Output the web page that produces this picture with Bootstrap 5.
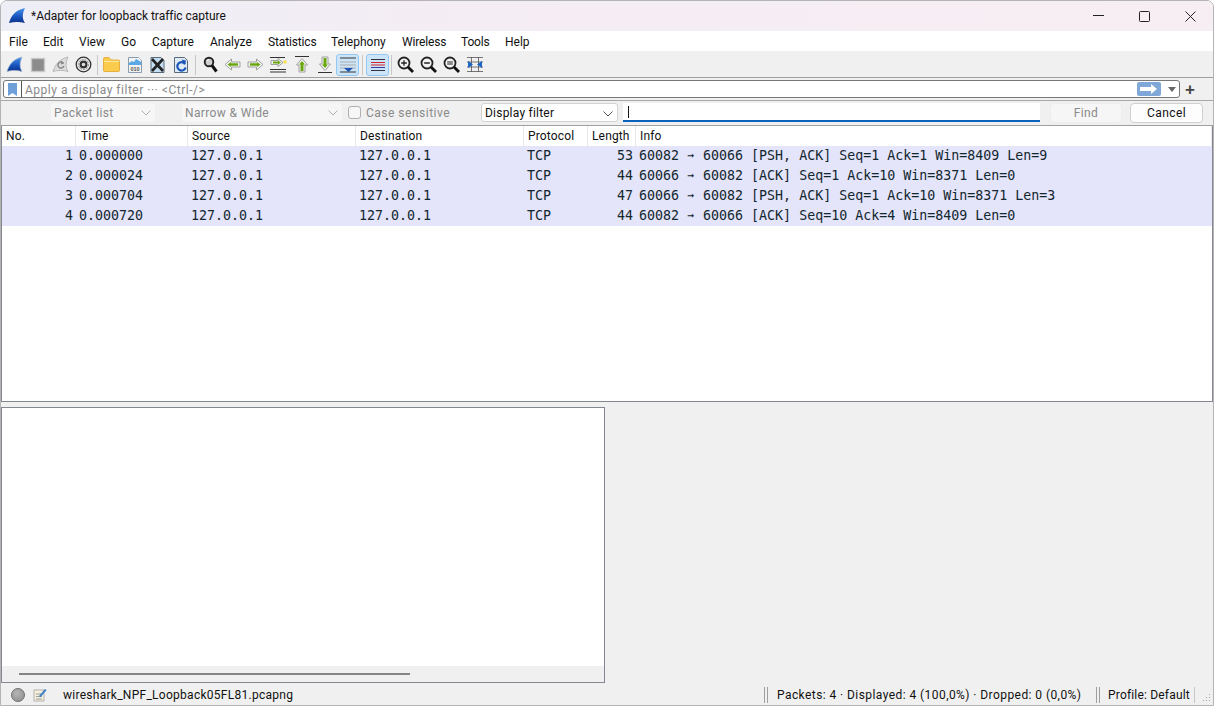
<!DOCTYPE html>
<html lang="en">
<head>
<meta charset="utf-8">
<title>Wireshark</title>
<link href="https://cdn.jsdelivr.net/npm/bootstrap@5.3.0/dist/css/bootstrap.min.css" rel="stylesheet">
<style>
html,body{height:100%;margin:0;overflow:hidden;background:#fff}
body{font-family:Roboto,"Liberation Sans",sans-serif;font-size:12px;color:#111;line-height:1}
.win{width:1214px;height:706px;display:flex;flex-direction:column;background:#f0f0f0;border:1px solid #b4b4b4;border-radius:7px 7px 0 0;overflow:hidden}
.titlebar{height:30px;flex:none;background:linear-gradient(90deg,#eeeef6,#f4edf3 40%,#f6eef3);padding-left:8px}
.ttl{margin-left:6px;letter-spacing:-.02px}
.wbtns{margin-left:auto;display:flex}
.wbtn{width:46px;height:30px;display:flex;align-items:center;justify-content:center}
.menubar{height:21px;flex:none;background:#fff;padding:2px 0 0 8px;border-bottom:1px solid #f0f0f0}
.menubar span{flex:none}
.m1{width:34px}.m2{width:36px}.m3{width:42px}.m4{width:31px}.m5{width:58px}.m6{width:58px}.m7{width:63px}.m8{width:71px}.m9{width:59px}.m10{width:44px}
.m7,.m9,.m10{letter-spacing:-.15px}
.toolbar{height:26px;flex:none;background:#f0f0f0;border-bottom:1px solid #a0a0a0;padding-left:2px}
.tb{width:23px;height:22px;display:flex;align-items:center;justify-content:center;flex:none;border:1px solid transparent;border-radius:3px}
.tb.on{background:#cce4f8;border-color:#92c8f4}
.tb.nudge{margin:0 -1px 0 1px}
.tsep{width:1px;height:20px;background:#c8c8c8;margin:0 2px;flex:none}
.tsep.w1{margin:0 2px 0 3px}
.tsep.w2{margin:0 3px}
.filterbar{height:23px;flex:none;padding:2px 0 2px 2px;border-bottom:1px solid #a8a8a8}
.fbox{width:1177px;height:18px;background:#fff;border:1px solid #777;border-radius:3px}
.fbook{width:18px;height:16px;border-right:1px solid #555;flex:none;display:flex;align-items:center;justify-content:center}
.fph{color:#8a8a8a;margin:1px 0 0 3px;letter-spacing:.52px;flex:1}
.fapply{width:24px;height:14px;background:#7fa8d8;border-radius:2px;display:flex;align-items:center;justify-content:center;flex:none}
.fdrop{width:18px;flex:none;display:flex;justify-content:center;padding-left:3px}
.fplus{font-family:"Liberation Sans",sans-serif;font-size:17px;font-weight:700;color:#444;margin-left:5px;line-height:1}
.findbar{height:25px;flex:none;padding:0 0 1px 50px;border-bottom:1px solid #a0a0a0}
.sel{height:19px;background:#f6f6f6;border-radius:3px;color:#8a8a8a;padding:0 3px;position:relative;flex:none;display:flex;align-items:center;letter-spacing:.38px}
.sel svg{position:absolute;right:4px;top:7px}
.s1{width:104px}.s2{width:160px;margin-left:27px}
.s3{width:137px;margin-left:8px;background:#fff;border:1px solid #d2d2d2;color:#111;padding:0 3px;letter-spacing:.22px}
.chk{width:13px;height:13px;border:1px solid #b0b0b0;border-radius:3px;background:#f6f6f6;margin:0 5px 0 6px;flex:none}
.cs{color:#8a8a8a;width:107px;letter-spacing:.5px;flex:none}
.fin{width:417px;height:19px;margin-left:5px;background:#fff;border-bottom:2px solid #0a63b8;flex:none;padding-left:5px;display:flex;align-items:center}
.caret{width:1px;height:12px;background:#111}
.fbtn{height:20px;border-radius:4px;display:flex;align-items:center;justify-content:center;flex:none;letter-spacing:.4px}
.bfind{width:72px;margin-left:10px;background:#f6f6f6;color:#8a8a8a;border:1px solid #ededed}
.bcan{width:73px;margin-left:8px;background:#fdfdfd;border:1px solid #d0d0d0;color:#111}
.plist{height:276px;flex:none;background:#fff;border:1px solid #828790;border-top:0}
.plist table{table-layout:fixed;width:1210px;border-collapse:separate;border-spacing:0;margin:0}
.plist th{font-weight:400;height:20px;padding:0 0 0 4px;border-right:1px solid #e8e8e8;background:#fff;white-space:nowrap;vertical-align:middle;letter-spacing:.15px}
.plist th:nth-child(2){padding-left:5px}
.plist td{height:20px;padding:0;background:#e4e4fb;color:#12272e;font-family:"DejaVu Sans Mono","Liberation Mono",monospace;font-size:13.3px;white-space:pre;vertical-align:middle;overflow:hidden}
.plist td.n{text-align:right;padding-right:3px}
.plist td.l{padding-left:3px}
.arw{display:inline-block;transform:scale(.85)}
.gap5{height:5px;flex:none}
.lower{height:276px;flex:none}
.dpane{width:604px;background:#fff;border:1px solid #828790;display:flex;flex-direction:column}
.dbody{flex:1}
.hbar{height:16px;background:#f0f0f0;display:flex;align-items:center;padding:0 194px 0 17px}
.hthumb{height:2px;background:#858585;flex:1}
.statusbar{height:22px;flex:none;padding:1px 0 0 10px;position:relative}
.led{width:14px;height:14px;border-radius:50%;background:radial-gradient(circle at 40% 35%,#b4b4b4,#8c8c8c);border:1px solid #6d6d6d;flex:none}
.fedit{margin-left:8px;flex:none}
.fname{margin-left:15px;letter-spacing:.27px}
.vs{width:4px;height:16px;border-left:1px solid #a0a0a0;border-right:1px solid #a0a0a0;flex:none}
.st1{width:328px;padding-left:9px;letter-spacing:.43px;flex:none;white-space:nowrap}
.st2{width:95px;padding-left:8px;margin-right:18px;border-right:1px solid #c8c8c8;height:16px;display:flex;align-items:center;flex:none;letter-spacing:.18px;white-space:nowrap}
.grip{position:absolute;right:2px;bottom:2px}
</style>
</head>
<body>
<div class="win">
  <div class="titlebar d-flex align-items-center">
    <svg width="16" height="16" viewBox="0 0 16 16"><defs><linearGradient id="sg" x1="0" y1="0" x2="0" y2="1"><stop offset="0" stop-color="#4a96e8"/><stop offset=".55" stop-color="#1a55c0"/><stop offset="1" stop-color="#0c3388"/></linearGradient></defs><path d="M0 15C2 8 6 2 16 0 13 6 13 11 16 15 11 13.500 5 13.500 0 15z" fill="url(#sg)"/></svg>
    <span class="ttl">*Adapter for loopback traffic capture</span>
    <div class="wbtns">
      <div class="wbtn"><svg width="11" height="2"><path d="M0 .5h11" stroke="#222"/></svg></div>
      <div class="wbtn"><svg width="11" height="11"><rect x=".5" y=".5" width="10" height="10" rx="1" fill="none" stroke="#222"/></svg></div>
      <div class="wbtn"><svg width="11" height="11"><path d="M.5.5l10 10M10.500.5l-10 10" stroke="#222"/></svg></div>
    </div>
  </div>
  <div class="menubar d-flex align-items-center">
    <span class="m1">File</span><span class="m2">Edit</span><span class="m3">View</span><span class="m4">Go</span><span class="m5">Capture</span><span class="m6">Analyze</span><span class="m7">Statistics</span><span class="m8">Telephony</span><span class="m9">Wireless</span><span class="m10">Tools</span><span>Help</span>
  </div>
  <div class="toolbar d-flex align-items-center">
    <div class="tb"><svg width="17" height="17" viewBox="0 0 17 17"><path d="M1 15.500C3 9 7 3 16 1 13.500 7 13.500 11 16 15.500 11 14 6 14 1 15.500z" fill="url(#sg)" stroke="#a8b8d0" stroke-width=".7"/></svg></div>
    <div class="tb"><svg width="16" height="16" viewBox="0 0 16 16"><rect x="1.500" y="1.500" width="13" height="13" fill="#8c8c8c" stroke="#c8c8c8" stroke-width="1.400"/></svg></div>
    <div class="tb"><svg width="17" height="17" viewBox="0 0 17 17"><path d="M1 15.500C3 9 7 3 16 1 13.500 7 13.500 11 16 15.500 11 14 6 14 1 15.500z" fill="#dcdcdc" stroke="#a8a8a8" stroke-width=".7"/><path d="M11.500 7.500a3 3 0 1 0 .3 2.500" fill="none" stroke="#8a8a8a" stroke-width="1.500"/><path d="M9 4.500l3 3-3 1z" fill="#8a8a8a"/></svg></div>
    <div class="tb"><svg width="17" height="17" viewBox="0 0 17 17"><circle cx="8.500" cy="8.500" r="7.300" fill="#e8e8e8" stroke="#333" stroke-width="1.300"/><circle cx="8.500" cy="8.500" r="5" fill="#fff" stroke="#777" stroke-width=".8" stroke-dasharray="2 1"/><circle cx="8.500" cy="8.500" r="4" fill="#333"/><circle cx="8.500" cy="8.500" r="1.800" fill="#ddd"/></svg></div>
    <div class="tsep"></div>
    <div class="tb"><svg width="17" height="15" viewBox="0 0 17 15"><path d="M.5 2q0-1.500 1.500-1.500h4L8 3h7.500q1 0 1 1v9.500q0 1-1 1H1.500q-1 0-1-1z" fill="#fbcb4c" stroke="#e2a52a" stroke-width=".8"/><path d="M1 4.500h15" stroke="#fde9a6"/></svg></div>
    <div class="tb"><svg width="14" height="16" viewBox="0 0 14 16"><path d="M.5.500h10l3 3v12H.5z" fill="#f2f2f2" stroke="#8a9cb0"/><path d="M1 6l3-2 2 1 2-3 2 1 3 2v3H1z" fill="#5aa8e6"/><path d="M11 1l2 2.500h-2z" fill="#fff"/><text x="7" y="14" font-size="5.500" font-family="Liberation Sans,sans-serif" font-weight="700" fill="#555" text-anchor="middle">010</text></svg></div>
    <div class="tb"><svg width="15" height="16" viewBox="0 0 15 16"><path d="M1 .5h10l3 3v12H1z" fill="#c4ddf2" stroke="#5a6a7a"/><path d="M2 2l11 12M13 2L2 14" stroke="#222" stroke-width="2.600"/></svg></div>
    <div class="tb"><svg width="14" height="16" viewBox="0 0 14 16"><path d="M.5.500h10l3 3v12H.5z" fill="#dfecf7" stroke="#5a6a7a"/><path d="M11 7a4.200 4.200 0 1 0 .6 3.500" fill="none" stroke="#1c55b8" stroke-width="2.200"/><path d="M7.500 2.500l4.500 1-1 4.500z" fill="#1c55b8"/></svg></div>
    <div class="tsep w1"></div>
    <div class="tb nudge"><svg width="16" height="17" viewBox="0 0 16 17"><circle cx="6" cy="6" r="4.300" fill="#cfcfcf" stroke="#222" stroke-width="1.900"/><path d="M4 4.500l2-1" stroke="#fff"/><path d="M9 9.500l4.500 6" stroke="#111" stroke-width="3"/></svg></div>
    <div class="tb"><svg width="17" height="13" viewBox="0 0 17 13"><path d="M1 6.500L7.500 1v3h8.500v5H7.500v3z" fill="#f4f4f4" stroke="#a0a0a0"/><path d="M3.500 6.500L7 4v1.200h7v2.600H7V9z" fill="#6aa80e"/></svg></div>
    <div class="tb"><svg width="17" height="13" viewBox="0 0 17 13"><path d="M16 6.500L9.500 1v3H1v5h8.500v3z" fill="#f4f4f4" stroke="#a0a0a0"/><path d="M13.500 6.500L10 4v1.200H3v2.600h7V9z" fill="#6aa80e"/></svg></div>
    <div class="tb"><svg width="17" height="16" viewBox="0 0 17 16"><path d="M0 .5h15M0 12.500h16M0 15h16" stroke="#333"/><path d="M13 5.500L8 1.500v2H1v4h7v2z" fill="#f4f4f4" stroke="#a0a0a0"/><path d="M11 5.500L8 3.500v1H3v2h5v1z" fill="#6aa80e"/><rect x="13.500" y="3.500" width="3" height="3" fill="#f4e04a"/></svg></div>
    <div class="tb"><svg width="14" height="17" viewBox="0 0 14 17"><path d="M0 .5h14" stroke="#333"/><path d="M7 2.500l5.500 6.500H10v7H4V9H1.500z" fill="#f4f4f4" stroke="#a0a0a0"/><path d="M7 5l3 3.500H8.500V15h-3V8.500H4z" fill="#6aa80e"/></svg></div>
    <div class="tb"><svg width="14" height="17" viewBox="0 0 14 17"><path d="M0 16.500h14" stroke="#333"/><path d="M7 14.500l5.500-6.500H10V1H4v7H1.500z" fill="#f4f4f4" stroke="#a0a0a0"/><path d="M7 12l3-3.500H8.500V2h-3v6.500H4z" fill="#6aa80e"/></svg></div>
    <div class="tb on"><svg width="18" height="16" viewBox="0 0 18 16"><path d="M1 1h16M1 15h16" stroke="#333"/><path d="M1 5h16M1 8h16M1 11h16" stroke="#aaa"/><path d="M5 11h9l-4.500 4z" fill="#1c55b8"/></svg></div>
    <div class="tsep w2"></div>
    <div class="tb on"><svg width="16" height="14" viewBox="0 0 16 14"><path d="M1 1.500h14M1 12.500h14" stroke="#334"/><path d="M1 4.500h14M1 7h14" stroke="#d8232a"/><path d="M1 9.500h14" stroke="#3a3a9a"/></svg></div>
    <div class="tsep"></div>
    <div class="tb"><svg width="17" height="17" viewBox="0 0 17 17"><circle cx="7" cy="7" r="5.500" fill="#f2f2f2" stroke="#222" stroke-width="1.800"/><path d="M11 11l5 5" stroke="#111" stroke-width="2.800"/><path d="M4.200 7h5.600M7 4.200v5.600" stroke="#222" stroke-width="1.300"/></svg></div>
    <div class="tb"><svg width="17" height="17" viewBox="0 0 17 17"><circle cx="7" cy="7" r="5.500" fill="#f2f2f2" stroke="#222" stroke-width="1.800"/><path d="M11 11l5 5" stroke="#111" stroke-width="2.800"/><path d="M4.200 7h5.600" stroke="#222" stroke-width="1.500"/></svg></div>
    <div class="tb"><svg width="17" height="17" viewBox="0 0 17 17"><circle cx="7" cy="7" r="5.500" fill="#f2f2f2" stroke="#222" stroke-width="1.800"/><path d="M11 11l5 5" stroke="#111" stroke-width="2.800"/><path d="M4.200 6h5.600M4.200 8h5.600" stroke="#222" stroke-width="1.100"/></svg></div>
    <div class="tb"><svg width="16" height="15" viewBox="0 0 16 15"><path d="M0 .5h16M0 14.500h16M0 5h16M0 10h16M4.500 0v15M11.500 0v15" stroke="#555" stroke-width=".8"/><path d="M1 4l5 3.500L1 11zM15 4l-5 3.500 5 3.500z" fill="#1c66c8"/></svg></div>
  </div>
  <div class="filterbar d-flex align-items-center">
    <div class="fbox d-flex align-items-center">
      <div class="fbook"><svg width="9" height="13" viewBox="0 0 9 13"><path d="M0 0h9v13L4.500 10 0 13z" fill="#6f9fd8"/></svg></div>
      <span class="fph">Apply a display filter ··· &lt;Ctrl-/&gt;</span>
      <div class="fapply"><svg width="18" height="10" viewBox="0 0 18 10"><path d="M0 3h11V0l6 5-6 5V7H0z" fill="#fff"/></svg></div>
      <div class="fdrop"><svg width="8" height="5"><path d="M0 0h8L4 5z" fill="#666"/></svg></div>
    </div>
    <span class="fplus">+</span>
  </div>
  <div class="findbar d-flex align-items-center">
    <div class="sel s1">Packet list<svg width="10" height="6"><path d="M.5.500L5 5 9.500.500" fill="none" stroke="#b0b0b0"/></svg></div>
    <div class="sel s2">Narrow &amp; Wide<svg width="10" height="6"><path d="M.5.500L5 5 9.500.500" fill="none" stroke="#b0b0b0"/></svg></div>
    <div class="chk"></div><span class="cs">Case sensitive</span>
    <div class="sel s3">Display filter<svg width="10" height="6"><path d="M.5.500L5 5 9.500.500" fill="none" stroke="#555"/></svg></div>
    <div class="fin"><div class="caret"></div></div>
    <div class="fbtn bfind">Find</div>
    <div class="fbtn bcan">Cancel</div>
  </div>
  <div class="plist">
    <table>
      <colgroup><col style="width:74px"><col style="width:112px"><col style="width:168px"><col style="width:168px"><col style="width:64px"><col style="width:48px"><col></colgroup>
      <thead><tr><th>No.</th><th>Time</th><th>Source</th><th>Destination</th><th>Protocol</th><th>Length</th><th>Info</th></tr></thead>
      <tbody>
        <tr><td class="n">1</td><td class="l">0.000000</td><td class="l">127.0.0.1</td><td class="l">127.0.0.1</td><td class="l">TCP</td><td class="n">53</td><td class="l">60082 <span class="arw">→</span> 60066 [PSH, ACK] Seq=1 Ack=1 Win=8409 Len=9</td></tr>
        <tr><td class="n">2</td><td class="l">0.000024</td><td class="l">127.0.0.1</td><td class="l">127.0.0.1</td><td class="l">TCP</td><td class="n">44</td><td class="l">60066 <span class="arw">→</span> 60082 [ACK] Seq=1 Ack=10 Win=8371 Len=0</td></tr>
        <tr><td class="n">3</td><td class="l">0.000704</td><td class="l">127.0.0.1</td><td class="l">127.0.0.1</td><td class="l">TCP</td><td class="n">47</td><td class="l">60066 <span class="arw">→</span> 60082 [PSH, ACK] Seq=1 Ack=10 Win=8371 Len=3</td></tr>
        <tr><td class="n">4</td><td class="l">0.000720</td><td class="l">127.0.0.1</td><td class="l">127.0.0.1</td><td class="l">TCP</td><td class="n">44</td><td class="l">60082 <span class="arw">→</span> 60066 [ACK] Seq=10 Ack=4 Win=8409 Len=0</td></tr>
      </tbody>
    </table>
  </div>
  <div class="gap5"></div>
  <div class="lower d-flex">
    <div class="dpane"><div class="dbody"></div><div class="hbar"><div class="hthumb"></div></div></div>
  </div>
  <div class="statusbar d-flex align-items-center">
    <div class="led"></div>
    <svg class="fedit" width="15" height="14" viewBox="0 0 15 14"><rect x="1" y="2" width="10" height="11" fill="#f4f0dc" stroke="#999" stroke-width=".7"/><path d="M3 6h6M3 8.500h6M3 11h6" stroke="#888" stroke-width=".8"/><path d="M6 8l6-7 1.500 1.200-6 7z" fill="#3a7fc8"/></svg>
    <span class="fname">wireshark_NPF_Loopback05FL81.pcapng</span>
    <div class="vs ms-auto"></div>
    <span class="st1">Packets: 4 · Displayed: 4 (100,0%) · Dropped: 0 (0,0%)</span>
    <div class="vs"></div>
    <span class="st2">Profile: Default</span>
    <svg class="grip" width="10" height="10" viewBox="0 0 10 10"><path d="M8 1h1v1H8zM5 4h1v1H5zM8 4h1v1H8zM2 7h1v1H2zM5 7h1v1H5zM8 7h1v1H8z" fill="#aaa"/></svg>
  </div>
</div>
</body>
</html>
